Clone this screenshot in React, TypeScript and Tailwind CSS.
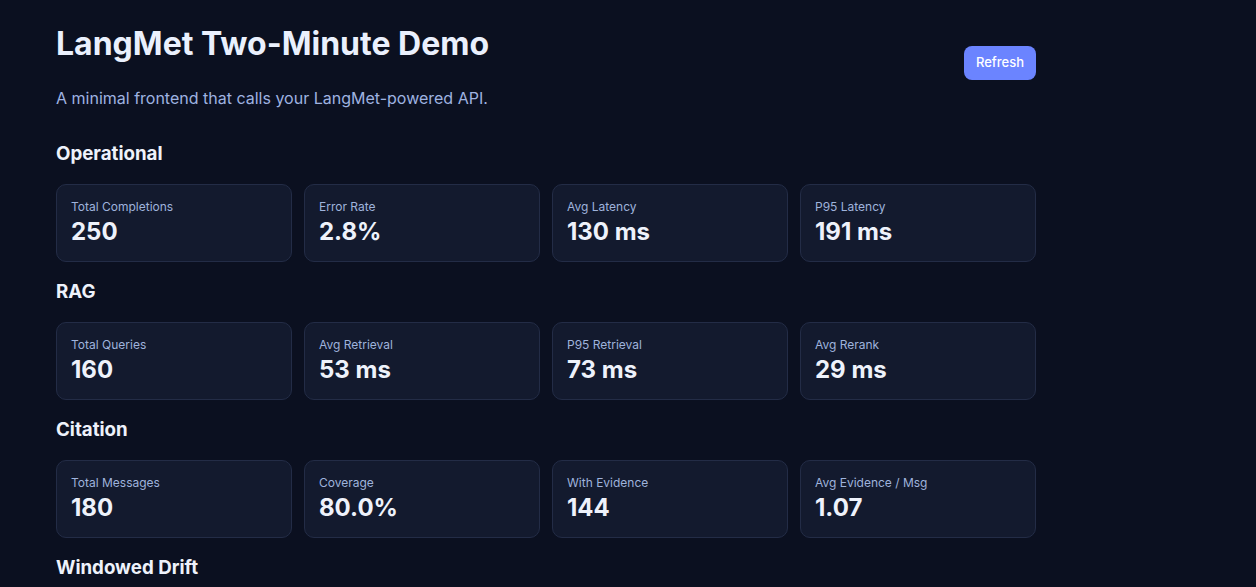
import React from 'react';

type Metric = { label: string; value: string };

const sections: { title: string; metrics: Metric[] }[] = [
  {
    title: 'Operational',
    metrics: [
      { label: 'Total Completions', value: '250' },
      { label: 'Error Rate', value: '2.8%' },
      { label: 'Avg Latency', value: '130 ms' },
      { label: 'P95 Latency', value: '191 ms' },
    ],
  },
  {
    title: 'RAG',
    metrics: [
      { label: 'Total Queries', value: '160' },
      { label: 'Avg Retrieval', value: '53 ms' },
      { label: 'P95 Retrieval', value: '73 ms' },
      { label: 'Avg Rerank', value: '29 ms' },
    ],
  },
  {
    title: 'Citation',
    metrics: [
      { label: 'Total Messages', value: '180' },
      { label: 'Coverage', value: '80.0%' },
      { label: 'With Evidence', value: '144' },
      { label: 'Avg Evidence / Msg', value: '1.07' },
    ],
  },
  { title: 'Windowed Drift', metrics: [] },
];

function Card({ label, value }: Metric) {
  return (
    <div className="rounded-[10px] border border-[#232c46] bg-[#131a2e] px-[14px] pt-[14px] pb-[13px]">
      <div className="text-[12px] leading-4 text-[#9fb3dc]">{label}</div>
      <div className="mt-px text-[24px] font-bold leading-8 text-[#eef2fb]">{value}</div>
    </div>
  );
}

export default function App() {
  return (
    <div className="min-h-screen bg-[#0b1020] font-['Inter',sans-serif] text-[#e8eefc]">
      <div className="w-[980px] ml-14 pt-[26px] pb-10">
        <header className="flex items-start justify-between">
          <div>
            <h1 className="text-[32px] font-bold leading-9 text-[#eaf0fd]">LangMet Two-Minute Demo</h1>
            <p className="mt-[24px] text-[16px] leading-6 text-[#9fb3e0]">
              A minimal frontend that calls your LangMet-powered API.
            </p>
          </div>
          <button className="mt-5 h-[34px] rounded-lg bg-[#6b84ff] px-3 text-[13px] font-medium text-white">
            Refresh
          </button>
        </header>

        {sections.map((s, i) => (
          <section key={s.title} className={i === 0 ? 'mt-[30px]' : 'mt-4'}>
            <h2 className="text-[18.72px] font-bold leading-7 text-[#eef2fb]">{s.title}</h2>
            {s.metrics.length > 0 && (
              <div className="mt-4 grid grid-cols-4 gap-3">
                {s.metrics.map((m) => (
                  <Card key={m.label} {...m} />
                ))}
              </div>
            )}
          </section>
        ))}
      </div>
    </div>
  );
}
